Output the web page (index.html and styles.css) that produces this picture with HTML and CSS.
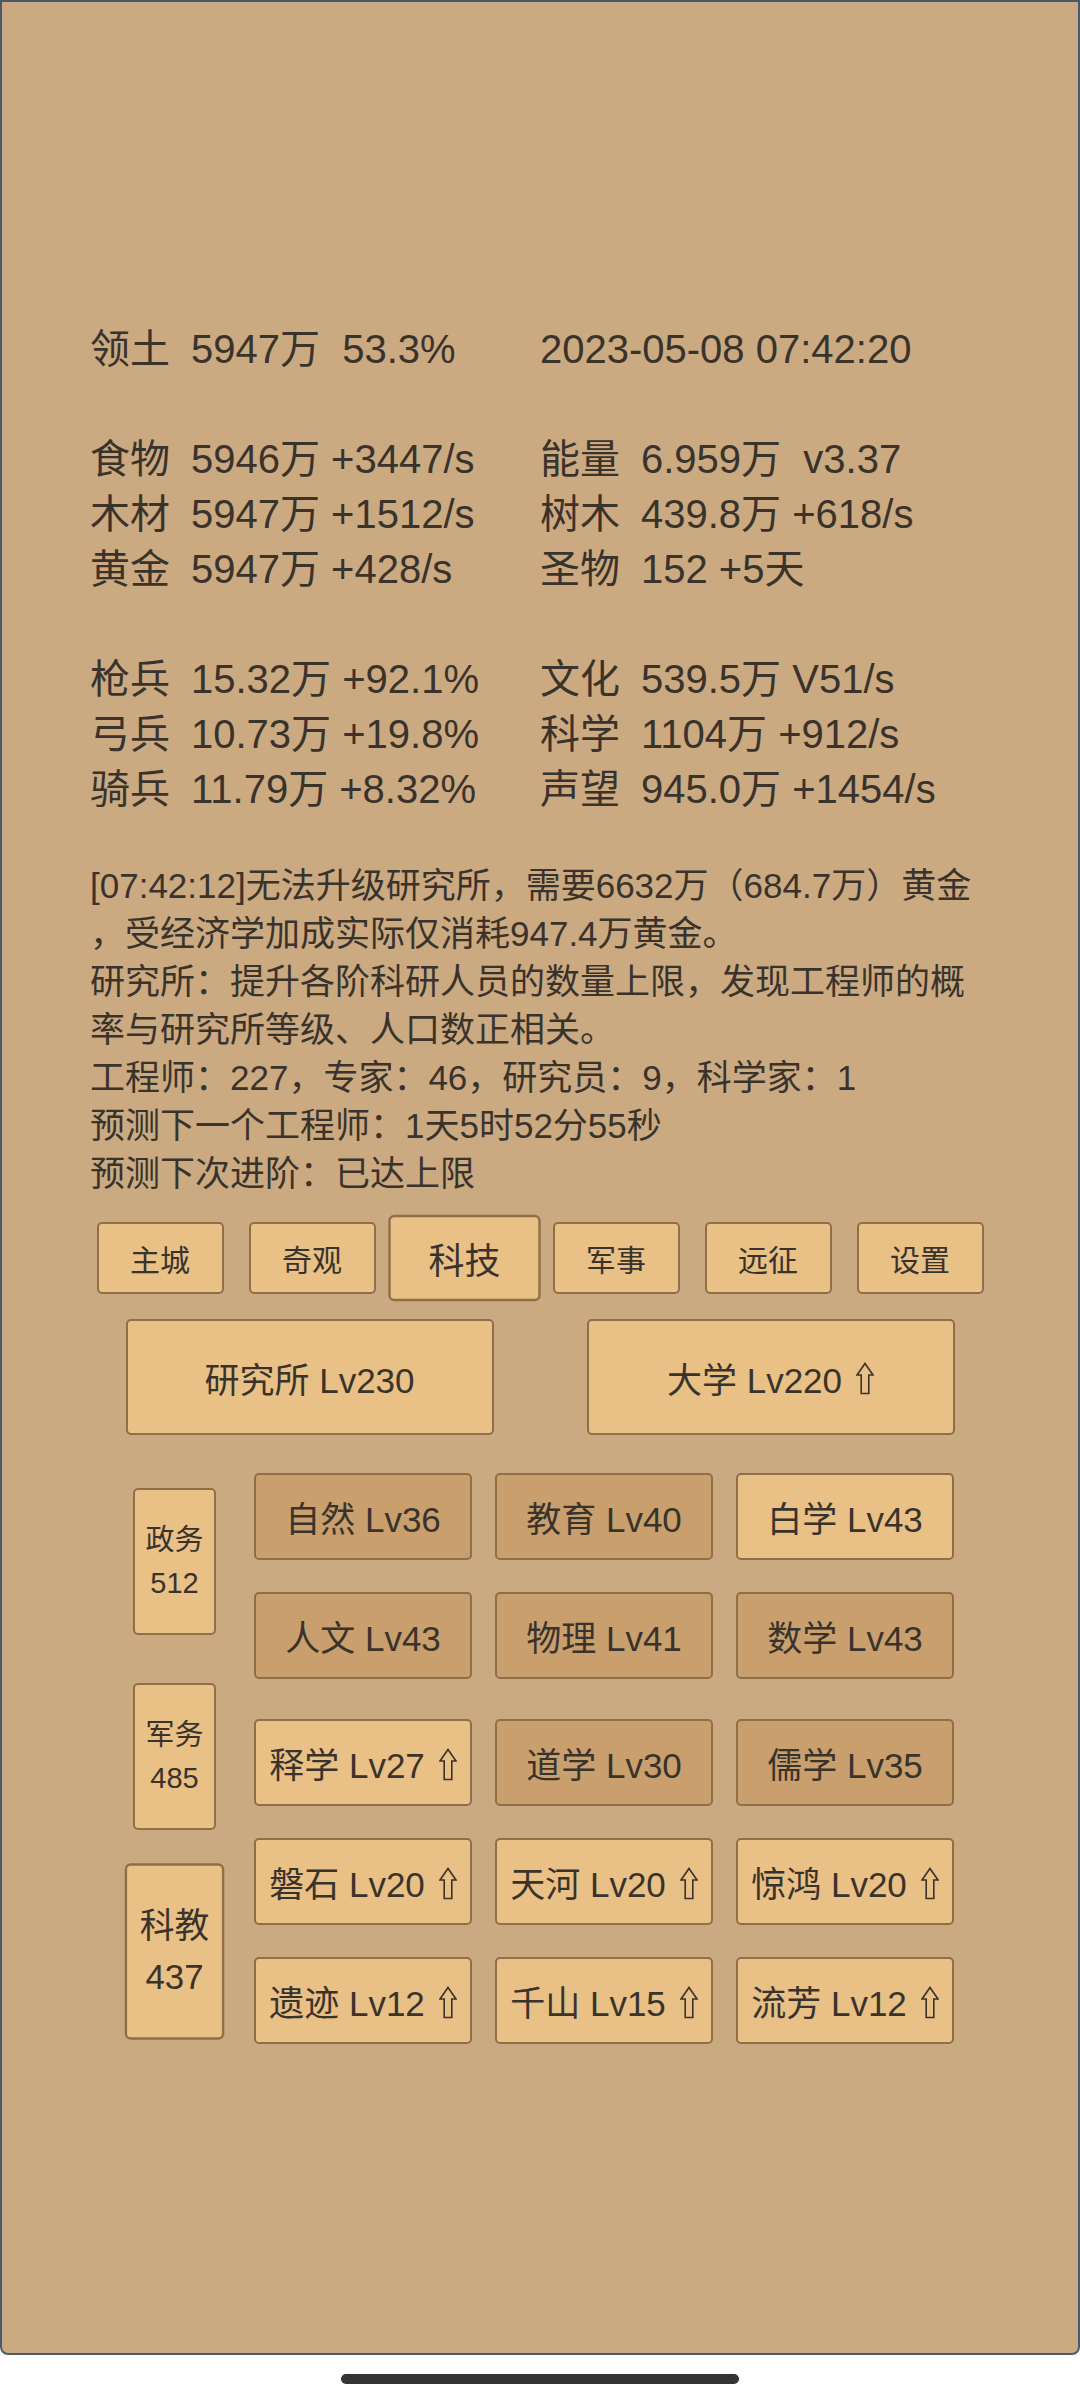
FILE: index.html
```html
<!DOCTYPE html>
<html lang="zh">

<head>
    <meta charset="utf-8">
    <meta name="viewport" content="width=device-width,initial-scale=1.0">
    <title>科技</title>
    <link rel="stylesheet" href="styles.css">
</head>

<body>
<div class="screen">
    <div class="stats">
        <div class="stat-group">
            <div class="stat"><span class="stat-name">领土</span><span class="stat-val">5947万  53.3%</span></div>
            <div class="stat"><span class="stat-val">2023-05-08 07:42:20</span></div>
        </div>
        <div class="stat-group">
            <div class="stat"><span class="stat-name">食物</span><span class="stat-val">5946万 +3447/s</span></div>
            <div class="stat"><span class="stat-name">能量</span><span class="stat-val">6.959万  v3.37</span></div>
            <div class="stat"><span class="stat-name">木材</span><span class="stat-val">5947万 +1512/s</span></div>
            <div class="stat"><span class="stat-name">树木</span><span class="stat-val">439.8万 +618/s</span></div>
            <div class="stat"><span class="stat-name">黄金</span><span class="stat-val">5947万 +428/s</span></div>
            <div class="stat"><span class="stat-name">圣物</span><span class="stat-val">152 +5天</span></div>
        </div>
        <div class="stat-group">
            <div class="stat"><span class="stat-name">枪兵</span><span class="stat-val">15.32万 +92.1%</span></div>
            <div class="stat"><span class="stat-name">文化</span><span class="stat-val">539.5万 V51/s</span></div>
            <div class="stat"><span class="stat-name">弓兵</span><span class="stat-val">10.73万 +19.8%</span></div>
            <div class="stat"><span class="stat-name">科学</span><span class="stat-val">1104万 +912/s</span></div>
            <div class="stat"><span class="stat-name">骑兵</span><span class="stat-val">11.79万 +8.32%</span></div>
            <div class="stat"><span class="stat-name">声望</span><span class="stat-val">945.0万 +1454/s</span></div>
        </div>
    </div>

    <div class="log">
        <div>[07:42:12]无法升级研究所，需要6632万（684.7万）黄金</div>
        <div>，受经济学加成实际仅消耗947.4万黄金。</div>
        <div>研究所：提升各阶科研人员的数量上限，发现工程师的概</div>
        <div>率与研究所等级、人口数正相关。</div>
        <div>工程师：227，专家：46，研究员：9，科学家：1</div>
        <div>预测下一个工程师：1天5时52分55秒</div>
        <div>预测下次进阶：已达上限</div>
    </div>

    <div class="tabs">
        <div class="btn tab">主城</div>
        <div class="btn tab">奇观</div>
        <div class="btn tab active">科技</div>
        <div class="btn tab">军事</div>
        <div class="btn tab">远征</div>
        <div class="btn tab">设置</div>
    </div>

    <div class="buildings">
        <div class="btn building">研究所 Lv230</div>
        <div class="btn building">大学 Lv220<svg class="up" viewBox="0 0 18 32"><path d="M9 1 L17 12.5 L12.8 12.5 L12.8 31 L5.2 31 L5.2 12.5 L1 12.5 Z"/></svg></div>
    </div>

    <div class="tech">
        <div class="branches">
            <div class="btn branch">政务<br>512</div>
            <div class="btn branch">军务<br>485</div>
            <div class="btn branch active">科教<br>437</div>
        </div>
        <div class="tech-lists">
            <div class="tech-grid">
                <div class="btn item done">自然 Lv36</div>
                <div class="btn item done">教育 Lv40</div>
                <div class="btn item">白学 Lv43</div>
                <div class="btn item done">人文 Lv43</div>
                <div class="btn item done">物理 Lv41</div>
                <div class="btn item done">数学 Lv43</div>
            </div>
            <div class="tech-grid second">
                <div class="btn item">释学 Lv27<svg class="up" viewBox="0 0 18 32"><path d="M9 1 L17 12.5 L12.8 12.5 L12.8 31 L5.2 31 L5.2 12.5 L1 12.5 Z"/></svg></div>
                <div class="btn item done">道学 Lv30</div>
                <div class="btn item done">儒学 Lv35</div>
                <div class="btn item">磐石 Lv20<svg class="up" viewBox="0 0 18 32"><path d="M9 1 L17 12.5 L12.8 12.5 L12.8 31 L5.2 31 L5.2 12.5 L1 12.5 Z"/></svg></div>
                <div class="btn item">天河 Lv20<svg class="up" viewBox="0 0 18 32"><path d="M9 1 L17 12.5 L12.8 12.5 L12.8 31 L5.2 31 L5.2 12.5 L1 12.5 Z"/></svg></div>
                <div class="btn item">惊鸿 Lv20<svg class="up" viewBox="0 0 18 32"><path d="M9 1 L17 12.5 L12.8 12.5 L12.8 31 L5.2 31 L5.2 12.5 L1 12.5 Z"/></svg></div>
                <div class="btn item">遗迹 Lv12<svg class="up" viewBox="0 0 18 32"><path d="M9 1 L17 12.5 L12.8 12.5 L12.8 31 L5.2 31 L5.2 12.5 L1 12.5 Z"/></svg></div>
                <div class="btn item">千山 Lv15<svg class="up" viewBox="0 0 18 32"><path d="M9 1 L17 12.5 L12.8 12.5 L12.8 31 L5.2 31 L5.2 12.5 L1 12.5 Z"/></svg></div>
                <div class="btn item">流芳 Lv12<svg class="up" viewBox="0 0 18 32"><path d="M9 1 L17 12.5 L12.8 12.5 L12.8 31 L5.2 31 L5.2 12.5 L1 12.5 Z"/></svg></div>
            </div>
        </div>
    </div>
</div>
<div class="home-bar"></div>
</body>
</html>
```

FILE: styles.css
```css
* {
    margin: 0px;
    padding: 0px;
    box-sizing: border-box;
}

body {
    width: 1080px;
    height: 2400px;
    background-color: #fff;
    color: #39332c;
    font-family: "Liberation Sans", "Noto Sans CJK SC", sans-serif;
    overflow: hidden;
}

.screen {
    height: 2355px;
    padding-top: 320px;
    background-color: #cbaa82;
    border: 2px solid #4b596c;
    border-radius: 0 0 8px 8px;
}

/* resources */
.stats {
    padding-left: 88px;
    font-size: 40px;
    line-height: 55px;
}

.stat-group {
    display: grid;
    grid-template-columns: 450px 450px;
}

.stat-group + .stat-group {
    margin-top: 55px;
}

.stat {
    white-space: pre;
}

.stat-name {
    display: inline-block;
    width: 101px;
}

/* message log */
.log {
    margin-top: 45px;
    padding-left: 88px;
    font-size: 35px;
    line-height: 48px;
    white-space: nowrap;
}

/* buttons */
.btn {
    display: flex;
    justify-content: center;
    align-items: center;
    background-color: #e9c085;
    border: 2px solid #8f6f47;
    border-radius: 5px;
    white-space: nowrap;
}

.btn.done {
    background-color: #c99f6e;
}

.btn.active {
    transform: scale(1.2);
}

.tabs {
    display: flex;
    justify-content: center;
    gap: 25px;
    margin-top: 24px;
}

.tab {
    width: 127px;
    height: 72px;
    font-size: 30px;
}

.buildings {
    display: flex;
    justify-content: center;
    gap: 93px;
    margin-top: 25px;
}

.building {
    width: 368px;
    height: 116px;
    font-size: 35px;
}

.up {
    width: 18px;
    height: 33px;
    margin-left: 14px;
    margin-top: 3px;
    fill: none;
    stroke: #39332c;
    stroke-width: 1.6;
    stroke-linejoin: miter;
}

/* tech tree */
.tech {
    display: flex;
    gap: 38px;
    margin-top: 38px;
    padding-left: 131px;
}

.branches {
    display: flex;
    flex-direction: column;
    gap: 48px;
    width: 83px;
    padding-top: 15px;
}

.branch {
    height: 147px;
    font-size: 29px;
    line-height: 43px;
    text-align: center;
}

.tech-grid {
    display: grid;
    grid-template-columns: repeat(3, 218px);
    grid-auto-rows: 87px;
    column-gap: 23px;
    row-gap: 32px;
}

.tech-grid.second {
    margin-top: 40px;
}

.item {
    font-size: 35px;
}

.home-bar {
    width: 398px;
    height: 10px;
    margin: 19px auto 0;
    background-color: #333;
    border-radius: 5px;
}
```
